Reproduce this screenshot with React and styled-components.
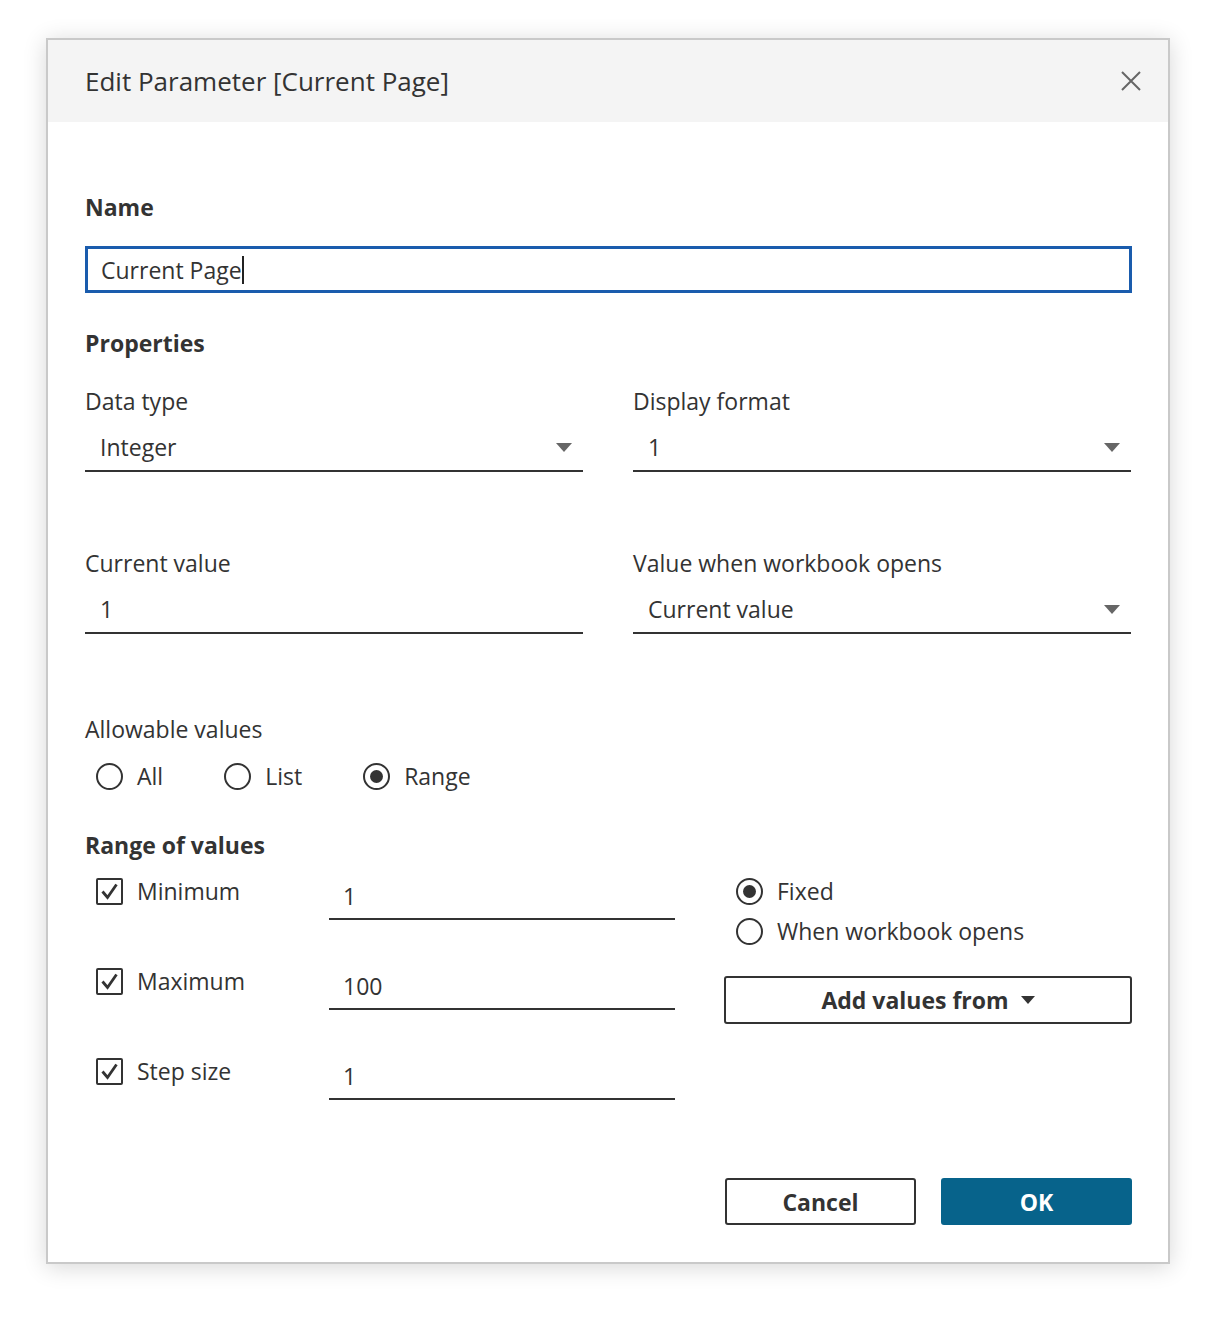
import React from 'react';
import styled, { createGlobalStyle, css } from 'styled-components';

const GlobalStyle = createGlobalStyle`
  body {
    margin: 0;
    background: #fff;
    font-family: "Open Sans", "Liberation Sans", sans-serif;
    color: #333;
  }
`;

const Page = styled.div`
  padding: 38px 0 55px 46px;
`;

const Dialog = styled.div`
  box-sizing: border-box;
  width: 1124px;
  border: 2px solid #c9c9c9;
  background: #fff;
  box-shadow: 0 3px 22px rgba(0, 0, 0, 0.16);
`;

const Header = styled.div`
  height: 82px;
  background: #f4f4f4;
  display: flex;
  align-items: center;
  justify-content: space-between;
  padding: 0 27px 0 37px;
`;

const Title = styled.h1`
  margin: 0;
  font-size: 26px;
  font-weight: 400;
  line-height: 34px;
  color: #333;
`;

const CloseButton = styled.button`
  border: none;
  background: none;
  padding: 0;
  width: 20px;
  height: 20px;
  display: flex;
`;

const Body = styled.div`
  padding: 70px 36px 37px 37px;
`;

const SectionTitle = styled.div`
  font-size: 23px;
  font-weight: 700;
  line-height: 30px;
  margin-top: ${p => p.$top || 0}px;
`;

const Label = styled.div`
  font-size: 23px;
  line-height: 30px;
  margin-top: ${p => p.$top || 0}px;
`;

const NameInput = styled.div`
  box-sizing: border-box;
  height: 47px;
  margin-top: 24px;
  border: 3px solid #1a5cad;
  display: flex;
  align-items: center;
  padding-left: 13px;
  font-size: 23px;

  span {
    border-right: 2px solid #222;
    line-height: 28px;
  }
`;

const TwoCol = styled.div`
  display: grid;
  grid-template-columns: 498px 498px;
  column-gap: 50px;
  margin-top: ${p => p.$top || 0}px;
`;

const Field = styled.div`
  box-sizing: border-box;
  height: 48px;
  margin-top: ${p => p.$top || 0}px;
  border-bottom: 2px solid #333;
  display: flex;
  align-items: center;
  justify-content: space-between;
  padding: 0 11px 0 15px;
  font-size: 23px;
`;

const Caret = styled.span`
  width: 0;
  height: 0;
  border-left: 8px solid transparent;
  border-right: 8px solid transparent;
  border-top: 9px solid #666;
  ${p => p.$small && css`
    border-left-width: 7px;
    border-right-width: 7px;
    border-top-width: 8px;
    border-top-color: #333;
  `}
`;

const RadioRow = styled.div`
  display: flex;
  gap: 61px;
  margin-top: 17px;
  padding-left: 11px;
`;

const Choice = styled.label`
  display: flex;
  align-items: center;
  gap: 14px;
  font-size: 23px;
  line-height: 30px;
`;

const RadioCircle = styled.span`
  box-sizing: border-box;
  width: 27px;
  height: 27px;
  border-radius: 50%;
  border: 2px solid #333;
  display: flex;
  align-items: center;
  justify-content: center;

  &::after {
    content: '';
    width: 13px;
    height: 13px;
    border-radius: 50%;
    background: #333;
    display: ${p => (p.$checked ? 'block' : 'none')};
  }
`;

const CheckBox = styled.span`
  box-sizing: border-box;
  width: 27px;
  height: 27px;
  border: 2px solid #333;
  border-radius: 2px;
  display: flex;
  align-items: center;
  justify-content: center;
`;

const RangeGrid = styled.div`
  display: grid;
  grid-template-columns: 244px 346px 1fr;
  margin-top: 12px;
`;

const RangeColumn = styled.div`
  display: flex;
  flex-direction: column;
  gap: 42px;
`;

const RangeRow = styled.div`
  box-sizing: border-box;
  height: 48px;
  display: flex;
  align-items: flex-start;
  padding: 4px 0 0 11px;
`;

const RangeInput = styled.div`
  box-sizing: border-box;
  height: 48px;
  border-bottom: 2px solid #333;
  display: flex;
  align-items: center;
  padding: 1px 0 0 14px;
  font-size: 23px;
`;

const RangeRight = styled.div`
  padding-left: 49px;
  display: flex;
  flex-direction: column;
`;

const RadioStack = styled.div`
  display: flex;
  flex-direction: column;
  gap: 10px;
  padding: 4px 0 0 12px;
`;

const Button = styled.button`
  box-sizing: border-box;
  height: 47px;
  border-radius: 3px;
  font-family: "Open Sans", "Liberation Sans", sans-serif;
  font-size: 23px;
  font-weight: 700;
  display: flex;
  align-items: center;
  justify-content: center;
  gap: 12px;
  cursor: pointer;
  border: 2px solid #333;
  background: #fff;
  color: #333;
  ${p => p.$primary && css`
    border-color: #07638b;
    background: #07638b;
    color: #fff;
  `}
`;

const AddButton = styled(Button)`
  width: 100%;
  margin-top: 30px;
  height: 48px;
`;

const Footer = styled.div`
  display: flex;
  justify-content: flex-end;
  gap: 25px;
  margin-top: 78px;

  ${Button} {
    width: 191px;
  }
`;

function Radio({ label, checked }) {
  return (
    <Choice>
      <RadioCircle $checked={checked} />
      {label}
    </Choice>
  );
}

function Check({ label }) {
  return (
    <Choice>
      <CheckBox>
        <svg width="19" height="19" viewBox="0 0 19 19">
          <path d="M2.5 9.5 L7.5 15.5 L16.5 2.5" fill="none" stroke="#333" strokeWidth="2.8" />
        </svg>
      </CheckBox>
      {label}
    </Choice>
  );
}

export default function App() {
  return (
    <Page>
      <GlobalStyle />
      <Dialog>
        <Header>
          <Title>Edit Parameter [Current Page]</Title>
          <CloseButton aria-label="Close">
            <svg width="20" height="20" viewBox="0 0 20 20">
              <path d="M1 1 L19 19 M19 1 L1 19" stroke="#666" strokeWidth="2" />
            </svg>
          </CloseButton>
        </Header>
        <Body>
          <SectionTitle>Name</SectionTitle>
          <NameInput><span>Current Page</span></NameInput>

          <SectionTitle $top={35}>Properties</SectionTitle>
          <TwoCol $top={28}>
            <div>
              <Label>Data type</Label>
              <Field $top={8}>Integer<Caret /></Field>
            </div>
            <div>
              <Label>Display format</Label>
              <Field $top={8}>1<Caret /></Field>
            </div>
          </TwoCol>
          <TwoCol $top={76}>
            <div>
              <Label>Current value</Label>
              <Field $top={8}>1</Field>
            </div>
            <div>
              <Label>Value when workbook opens</Label>
              <Field $top={8}>Current value<Caret /></Field>
            </div>
          </TwoCol>

          <Label $top={80}>Allowable values</Label>
          <RadioRow>
            <Radio label="All" />
            <Radio label="List" />
            <Radio label="Range" checked />
          </RadioRow>

          <SectionTitle $top={39}>Range of values</SectionTitle>
          <RangeGrid>
            <RangeColumn>
              <RangeRow><Check label="Minimum" /></RangeRow>
              <RangeRow><Check label="Maximum" /></RangeRow>
              <RangeRow><Check label="Step size" /></RangeRow>
            </RangeColumn>
            <RangeColumn>
              <RangeInput>1</RangeInput>
              <RangeInput>100</RangeInput>
              <RangeInput>1</RangeInput>
            </RangeColumn>
            <RangeRight>
              <RadioStack>
                <Radio label="Fixed" checked />
                <Radio label="When workbook opens" />
              </RadioStack>
              <AddButton>Add values from <Caret $small /></AddButton>
            </RangeRight>
          </RangeGrid>

          <Footer>
            <Button>Cancel</Button>
            <Button $primary>OK</Button>
          </Footer>
        </Body>
      </Dialog>
    </Page>
  );
}
